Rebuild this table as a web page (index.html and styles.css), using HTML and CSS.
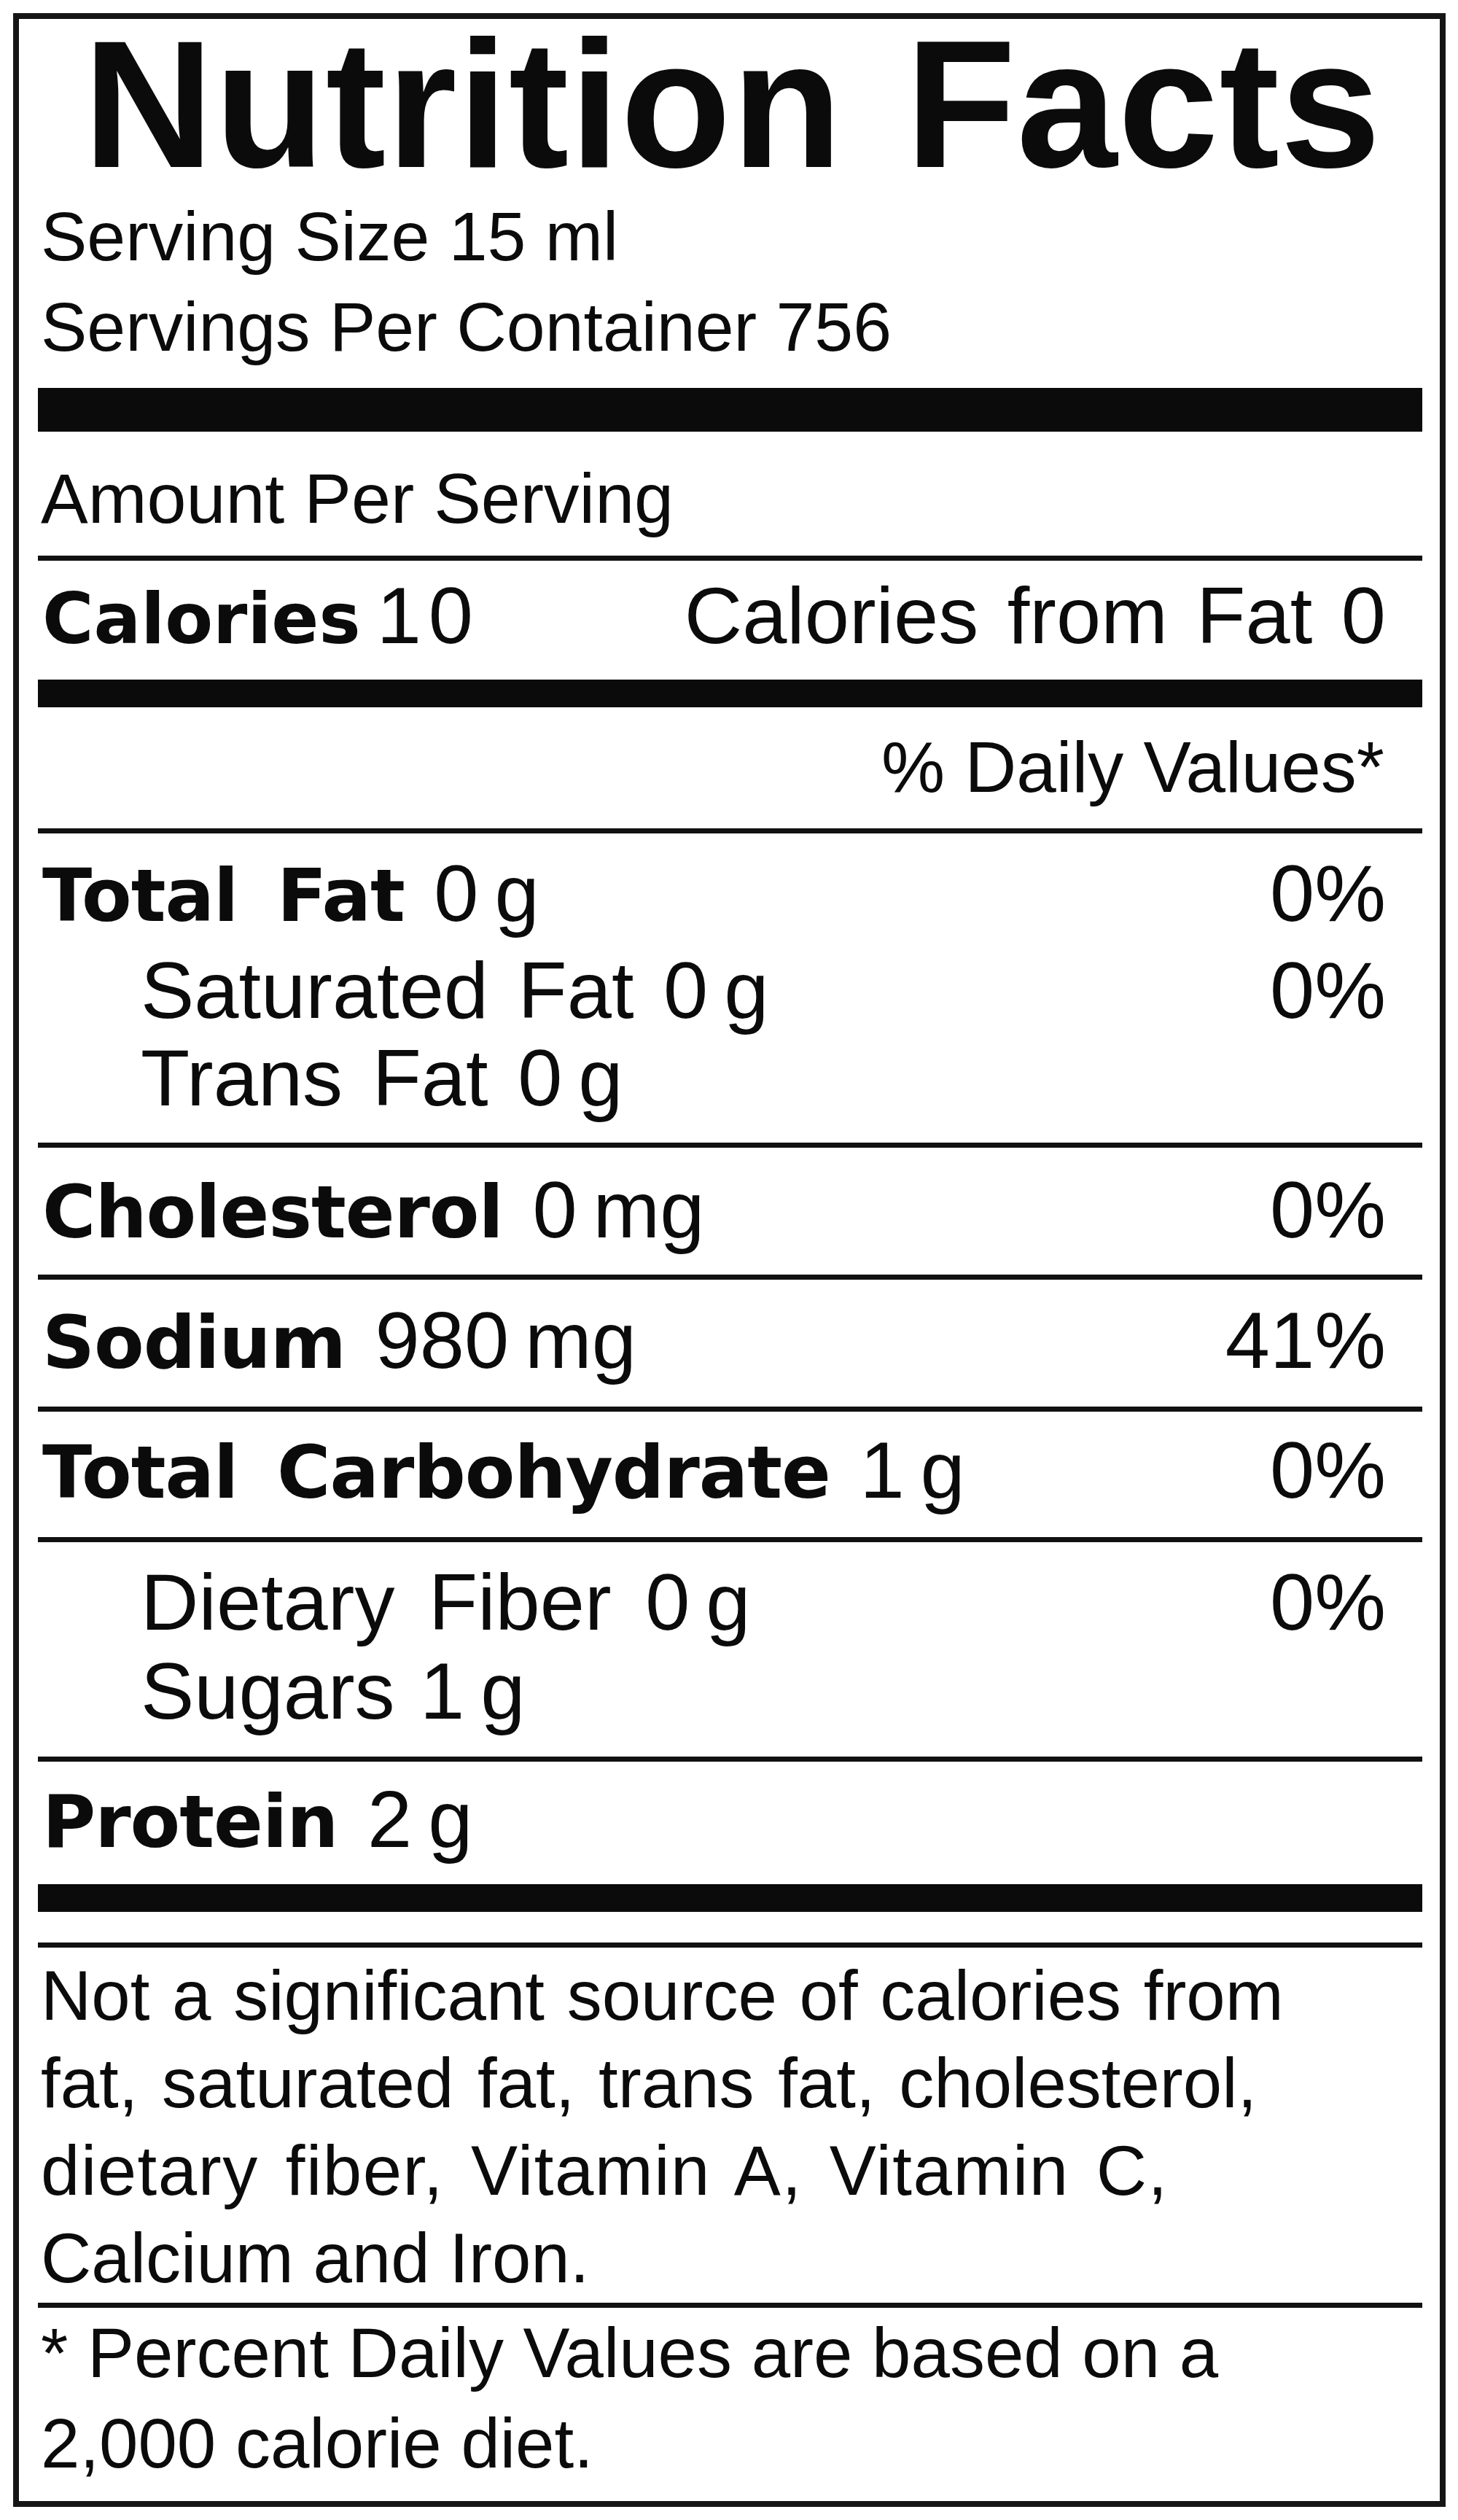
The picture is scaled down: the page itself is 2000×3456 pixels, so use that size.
FILE: index.html
```html
<!DOCTYPE html>
<html lang="en">
<head>
<meta charset="utf-8">
<title>Nutrition Facts</title>
<link rel="stylesheet" href="styles.css">
</head>
<body>
<div class="label">
  <h1 class="title">Nutrition Facts</h1>
  <div class="serving">
    <div class="line">Serving Size 15 ml</div>
    <div class="line">Servings Per Container 756</div>
  </div>
  <div class="bar bar-thick"></div>
  <div class="amount">Amount Per Serving</div>
  <div class="rule"></div>
  <div class="row calories"><span><b>Calories</b>&thinsp;<span class="cal-num">10</span></span><span class="cff">Calories from Fat 0</span></div>
  <div class="bar bar-medium"></div>
  <div class="dv">% Daily Values*</div>
  <div class="rule"></div>
  <div class="group fat">
    <div class="row"><span><b>Total Fat</b> 0&thinsp;g</span><span>0%</span></div>
    <div class="row sub sat"><span>Saturated Fat 0&thinsp;g</span><span>0%</span></div>
    <div class="row sub"><span>Trans Fat 0&thinsp;g</span></div>
  </div>
  <div class="rule"></div>
  <div class="group chol">
    <div class="row"><span><b>Cholesterol</b> 0&thinsp;mg</span><span>0%</span></div>
  </div>
  <div class="rule"></div>
  <div class="group sodium">
    <div class="row"><span><b>Sodium</b> 980&thinsp;mg</span><span>41%</span></div>
  </div>
  <div class="rule"></div>
  <div class="group carb">
    <div class="row"><span><b>Total Carbohydrate</b> 1&thinsp;g</span><span>0%</span></div>
  </div>
  <div class="rule"></div>
  <div class="group fiber">
    <div class="row sub fib"><span>Dietary Fiber 0&thinsp;g</span><span>0%</span></div>
    <div class="row sub sugars"><span>Sugars 1&thinsp;g</span></div>
  </div>
  <div class="rule"></div>
  <div class="group protein">
    <div class="row"><span><b>Protein</b> 2&thinsp;g</span></div>
  </div>
  <div class="bar bar-medium"></div>
  <div class="rule rule-gap"></div>
  <div class="note note-main">
    <div class="nline l1">Not a significant source of calories from</div>
    <div class="nline l2">fat, saturated fat, trans fat, cholesterol,</div>
    <div class="nline l3">dietary fiber, Vitamin A, Vitamin C,</div>
    <div class="nline">Calcium and Iron.</div>
  </div>
  <div class="rule"></div>
  <div class="note note-dv">
    <div class="nline">* Percent Daily Values are based on a</div>
    <div class="nline">2,000 calorie diet.</div>
  </div>
</div>
</body>
</html>
```

FILE: styles.css
```css
html, body {
  margin: 0;
  padding: 0;
  background: #ffffff;
}

body {
  width: 2000px;
  height: 3456px;
  font-family: "Liberation Sans", Arial, sans-serif;
  color: #0b0b0b;
}

.label {
  box-sizing: border-box;
  margin: 18px 0 0 18px;
  width: 1965px;
  height: 3420px;
  border: 8px solid #151515;
  padding: 0 24px 0 26px;
  display: flex;
  flex-direction: column;
}

.title {
  margin: 0;
  height: 234px;
  line-height: 234px;
  font-size: 248px;
  font-weight: 700;
  text-align: center;
  letter-spacing: 1px;
  word-spacing: 16px;
  padding-left: 6px;
  white-space: nowrap;
}

.serving {
  padding: 2px 0 22px 4px;
  font-size: 95px;
}

.serving .line {
  line-height: 124px;
  height: 124px;
  white-space: nowrap;
}

.bar {
  background: #0b0b0b;
  flex: none;
}

.bar-thick {
  height: 60px;
}

.bar-medium {
  height: 38px;
}

.rule {
  height: 7px;
  background: #111111;
  flex: none;
}

.rule-gap {
  margin-top: 42px;
}

.amount {
  box-sizing: border-box;
  height: 170px;
  padding: 14px 0 0 4px;
  line-height: 156px;
  font-size: 97px;
  white-space: nowrap;
}

.row {
  display: flex;
  justify-content: space-between;
  align-items: baseline;
  height: 120px;
  line-height: 120px;
  font-size: 110px;
  padding: 0 50px 0 6px;
  white-space: nowrap;
  word-spacing: 10px;
}

.row b {
  font-family: "DejaVu Sans", sans-serif;
  font-weight: 700;
  font-size: 100px;
  letter-spacing: -1px;
  word-spacing: 20px;
}

.row.sub {
  padding-left: 141px;
}

.row.fib {
  word-spacing: 16px;
}

.row.sugars {
  word-spacing: 4px;
}

.calories {
  box-sizing: border-box;
  height: 163px;
  line-height: 130px;
  padding-top: 10px;
  word-spacing: 0;
}

.calories b {
  font-size: 96px;
  letter-spacing: 0;
  word-spacing: 0;
}

.cal-num {
  letter-spacing: 10px;
}

.cff {
  word-spacing: 9px;
}

.dv {
  box-sizing: border-box;
  height: 166px;
  padding: 22px 52px 0 0;
  line-height: 120px;
  font-size: 98px;
  text-align: right;
  white-space: nowrap;
}

.group {
  box-sizing: border-box;
}

.fat {
  height: 424px;
  padding-top: 22px;
}

.fat .sat {
  margin-top: 13px;
}

.chol {
  height: 174px;
  padding-top: 25px;
}

.sodium {
  height: 174px;
  padding-top: 23px;
}

.carb {
  height: 172px;
  padding-top: 20px;
}

.fiber {
  height: 294px;
  padding-top: 22px;
}

.fiber .sugars {
  margin-top: 2px;
}

.protein {
  height: 168px;
  padding-top: 19px;
}

.note {
  box-sizing: border-box;
  font-size: 96px;
  padding-left: 4px;
}

.note .nline {
  white-space: nowrap;
}

.note .l1 {
  word-spacing: 4px;
}

.note .l2 {
  word-spacing: 6px;
}

.note .l3 {
  word-spacing: 9px;
  letter-spacing: 1.5px;
}

.note-main {
  height: 487px;
  padding-top: 6px;
}

.note-main .nline {
  height: 120px;
  line-height: 120px;
}

.note-dv {
  padding-top: 0;
}

.note-dv .nline {
  height: 124px;
  line-height: 124px;
}
```
